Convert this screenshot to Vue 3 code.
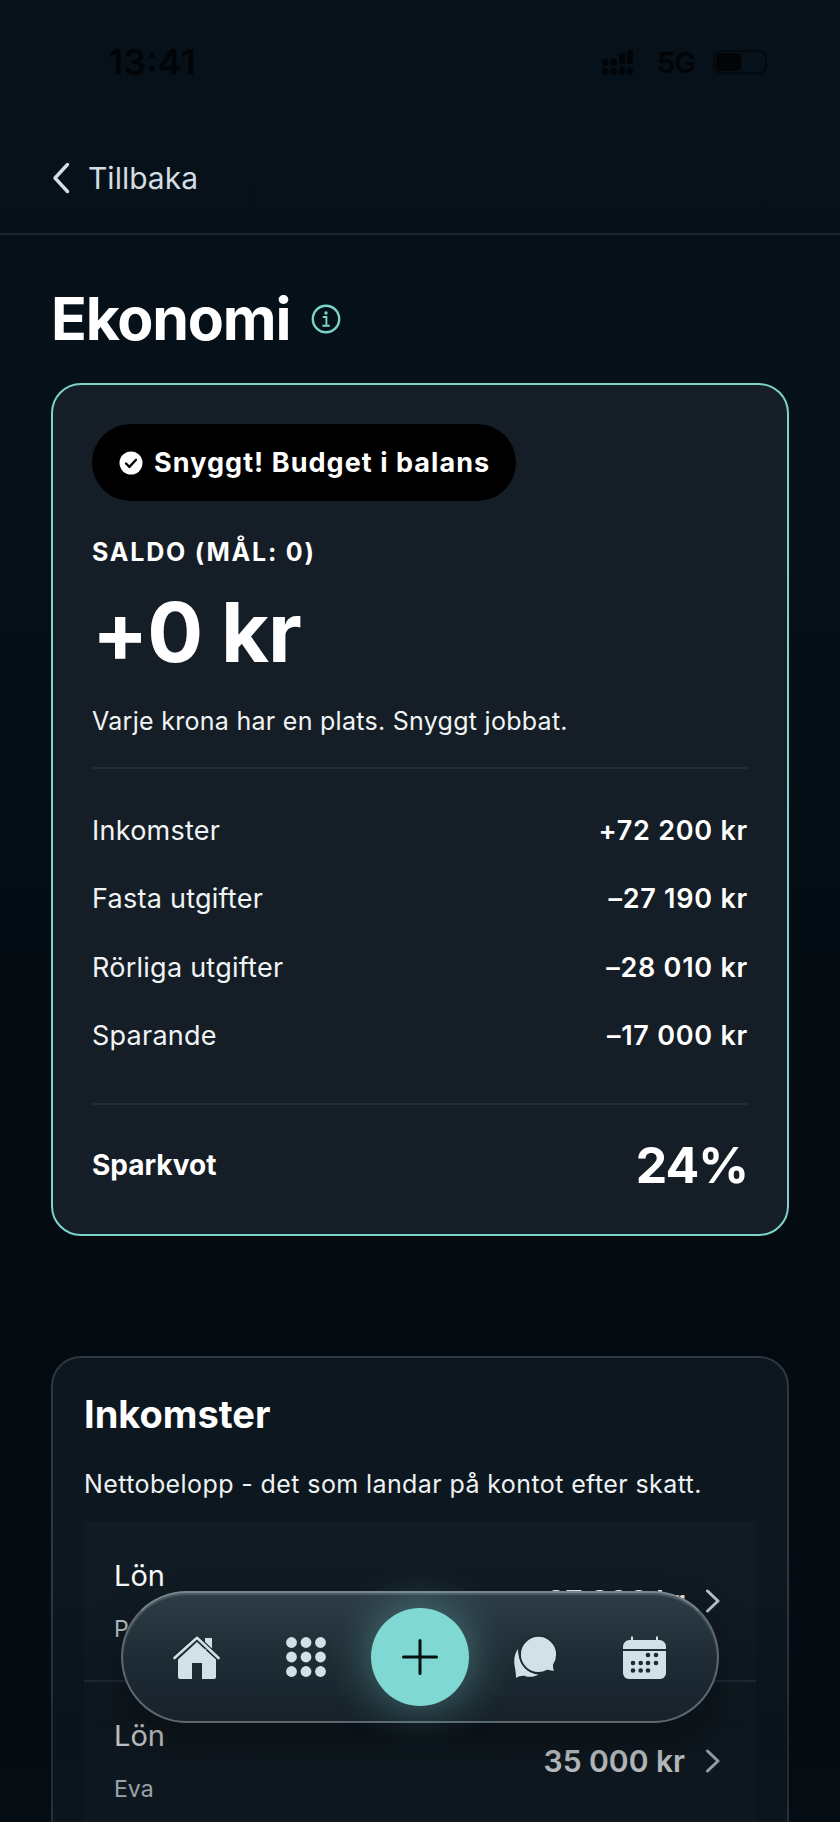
<script setup>
const summary = [
  { label: 'Inkomster', value: '+72 200 kr' },
  { label: 'Fasta utgifter', value: '–27 190 kr' },
  { label: 'Rörliga utgifter', value: '–28 010 kr' },
  { label: 'Sparande', value: '–17 000 kr' },
]

const incomes = [
  { title: 'Lön', owner: 'Per', amount: '37 200 kr' },
  { title: 'Lön', owner: 'Eva', amount: '35 000 kr' },
]

const calendarDots = [
  [25, 19], [33, 19],
  [10, 27], [17.7, 27], [25, 27], [33, 27],
  [10, 34.5], [17.7, 34.5], [25, 34.5],
]
</script>

<template>
  <div class="page">
    <div class="status">
      <span class="time">13:41</span>
      <div class="status-right">
        <svg class="signal" width="31" height="26" viewBox="0 0 31 26">
          <rect x="0" y="10" width="6.500" height="7" rx="3" />
          <rect x="0" y="19" width="6.500" height="7" rx="3" />
          <rect x="8.500" y="10" width="6.500" height="7" rx="3" />
          <rect x="8.500" y="19" width="6.500" height="7" rx="3" />
          <rect x="17" y="4" width="6.500" height="11" rx="3" />
          <rect x="17" y="18" width="6.500" height="8" rx="3" />
          <rect x="25" y="1" width="6" height="14" rx="3" />
          <rect x="25" y="18" width="6" height="8" rx="3" />
        </svg>
        <span class="net">5G</span>
        <div class="battery"><div class="battery-fill"></div></div>
      </div>
    </div>

    <header class="topbar">
      <svg width="18" height="32" viewBox="0 0 18 32" fill="none">
        <path d="M15.500 2.500 3 16l12.500 13.500" stroke="#d6e0e4" stroke-width="3.400" stroke-linecap="round" stroke-linejoin="round" />
      </svg>
      <span class="back">Tillbaka</span>
    </header>

    <main class="content">
      <div class="heading">
        <h1>Ekonomi</h1>
        <svg width="30" height="30" viewBox="0 0 30 30" fill="none">
          <circle cx="15" cy="15" r="13.200" stroke="#7dd3cc" stroke-width="2.400" />
          <circle cx="15" cy="9" r="1.700" fill="#7dd3cc" />
          <path d="M11.800 13h3.600v8.600M11.400 21.800h7.400" stroke="#7dd3cc" stroke-width="1.900" />
        </svg>
      </div>

      <section class="balance">
        <div class="badge">
          <svg width="24" height="24" viewBox="0 0 24 24">
            <circle cx="12" cy="12" r="11.500" fill="#fff" />
            <path d="M7 12.500l3.400 3.400L17 8.800" fill="none" stroke="#000" stroke-width="2.300" stroke-linecap="round" stroke-linejoin="round" />
          </svg>
          <span>Snyggt! Budget i balans</span>
        </div>
        <div class="saldo-label">SALDO (MÅL: 0)</div>
        <div class="saldo">+0 kr</div>
        <p class="saldo-note">Varje krona har en plats. Snyggt jobbat.</p>

        <div class="rows">
          <div v-for="row in summary" :key="row.label" class="row">
            <span>{{ row.label }}</span>
            <strong>{{ row.value }}</strong>
          </div>
        </div>

        <div class="rate">
          <strong>Sparkvot</strong>
          <span>24%</span>
        </div>
      </section>

      <section class="income">
        <h2>Inkomster</h2>
        <p>Nettobelopp - det som landar på kontot efter skatt.</p>
        <div class="income-list">
          <div v-for="item in incomes" :key="item.owner" class="income-row">
            <div class="income-text">
              <span class="income-title">{{ item.title }}</span>
              <span class="income-owner">{{ item.owner }}</span>
            </div>
            <span class="income-amount">{{ item.amount }}</span>
            <svg width="16" height="24" viewBox="0 0 16 24" fill="none">
              <path d="M2.500 2 13 12 2.500 22" stroke="#c3ccd2" stroke-width="3" stroke-linecap="round" stroke-linejoin="round" />
            </svg>
          </div>
        </div>
      </section>
    </main>

    <div class="fade"></div>

    <nav class="dock">
      <svg class="nav-icon home" width="47" height="43" viewBox="0 0 47 43">
        <rect x="32" y="2" width="7" height="12" fill="#d3e0e7" />
        <path d="M24 6 43 23.500V41a2 2 0 0 1-2 2H29V27H19v16H7a2 2 0 0 1-2-2V23.500Z" fill="#d3e0e7" />
        <path d="M1.500 22 24 1.800 45.500 22" fill="none" stroke="#1d2a33" stroke-width="5" stroke-linejoin="round" />
        <path d="M1.500 22 24 1.800 45.500 22" fill="none" stroke="#d3e0e7" stroke-width="2.600" stroke-linecap="round" stroke-linejoin="round" />
      </svg>
      <svg class="nav-icon" width="40" height="40" viewBox="0 0 40 40" fill="#d3e0e7">
        <template v-for="y in [5.500, 20, 34.500]" :key="y">
          <circle v-for="x in [5.500, 20, 34.500]" :key="x" :cx="x" :cy="y" r="5.400" />
        </template>
      </svg>
      <button class="add">
        <svg width="36" height="36" viewBox="0 0 36 36">
          <path d="M18 1.500v33M1.500 18h33" stroke="#06100f" stroke-width="3" stroke-linecap="round" />
        </svg>
      </button>
      <svg class="nav-icon" width="44" height="44" viewBox="0 0 44 44">
        <path d="M4 14C0 19-.5 27 1 33c.5 2.500 1 6.500 1 10 3-1.800 6.500-2.800 9.500-1.800 4 1 9 .8 13-1.700C15 39 4 30 4 14Z" fill="#d3e0e7" />
        <path d="M24.500 .8C14.500 .8 6 9.300 6 19.500S14.500 38 24.500 38c3.500 0 6.500-1 9-2.400 2.200.4 5 1 7.700 1.400-1.200-2.800-1.500-5.600-1.200-7.600 2-2.900 3-6.300 3-10C43 9.300 34.500 .8 24.500 .8Z" fill="#d3e0e7" stroke="#1d2a33" stroke-width="1.800" />
      </svg>
      <svg class="nav-icon calendar" width="43" height="43" viewBox="0 0 43 43">
        <path d="M8 0.500h2V4h23V0.500h2V4h1.500A6.500 6.500 0 0 1 43 10.500V13H0v-2.500A6.500 6.500 0 0 1 6.500 4H8Z" fill="#d3e0e7" />
        <path d="M0 15h43v22a6 6 0 0 1-6 6H6a6 6 0 0 1-6-6Z" fill="#d3e0e7" />
        <circle v-for="dot in calendarDots" :key="dot.join()" :cx="dot[0]" :cy="dot[1]" r="2.300" fill="#1d2a33" />
      </svg>
    </nav>
  </div>
</template>

<style scoped>
.page {
  position: relative;
  width: 840px;
  height: 1822px;
  overflow: hidden;
  background: linear-gradient(180deg, #07111a 0%, #061018 25%, #030a10 70%, #050d14 100%);
  font-family: Inter, "Liberation Sans", sans-serif;
  color: #fff;
}

.status {
  height: 134px;
  box-sizing: border-box;
  padding: 40px 73px 0 108px;
  display: flex;
  justify-content: space-between;
  align-items: flex-start;
  color: #010508;
}

.time {
  font-size: 36px;
  font-weight: 600;
  line-height: 44px;
}

.status-right {
  display: flex;
  align-items: center;
  gap: 24px;
  height: 44px;
}

.signal rect {
  fill: #010508;
}

.net {
  font-size: 29px;
  font-weight: 600;
  margin-right: -6px;
  letter-spacing: -1px;
}

.battery {
  width: 54px;
  height: 24px;
  box-sizing: border-box;
  padding: 1px;
  border: 2px solid #04090e;
  border-radius: 8px;
}

.battery-fill {
  width: 25px;
  height: 100%;
  background: #010508;
  border-radius: 5px;
}

.topbar {
  height: 101px;
  box-sizing: border-box;
  padding: 0 52px 12px;
  display: flex;
  align-items: center;
  gap: 18px;
  border-bottom: 2px solid #1a252d;
}

.back {
  font-size: 30px;
  color: #d3dde2;
}

.content {
  padding: 0 51px 0 51px;
}

.heading {
  display: flex;
  align-items: center;
  gap: 21px;
  height: 148px;
  box-sizing: border-box;
  padding-top: 19px;
}

h1 {
  margin: 0;
  font-size: 59px;
  font-weight: 700;
  letter-spacing: -1.2px;
  line-height: 1;
}

.balance {
  box-sizing: border-box;
  height: 853px;
  padding: 39px 39px 0;
  background: #151e26;
  border: 2px solid #7dd3cc;
  border-radius: 30px;
}

.badge {
  display: inline-flex;
  align-items: center;
  gap: 11px;
  height: 77px;
  padding: 0 26px 0 27px;
  border-radius: 39px;
  background: #000;
  font-size: 27px;
  font-weight: 700;
  letter-spacing: 1.05px;
}

.saldo-label {
  margin-top: 36px;
  font-size: 25px;
  font-weight: 700;
  letter-spacing: 1.8px;
  line-height: 30px;
}

.saldo {
  margin-top: 20px;
  font-size: 83px;
  font-weight: 700;
  line-height: 90px;
  letter-spacing: -1px;
}

.saldo-note {
  margin: 29px 0 0;
  padding-bottom: 31px;
  font-size: 25px;
  line-height: 30px;
  letter-spacing: 0.28px;
  border-bottom: 2px solid #222c34;
  color: #f1f4f5;
}

.rows {
  padding: 27px 0 33px;
  border-bottom: 2px solid #222c34;
}

.row {
  height: 68.500px;
  display: flex;
  align-items: center;
  justify-content: space-between;
  font-size: 27px;
  letter-spacing: 0.25px;
  color: #f1f4f5;
}

.row strong {
  font-weight: 600;
  letter-spacing: 0.75px;
  color: #fff;
}

.rate {
  height: 120px;
  display: flex;
  align-items: center;
  justify-content: space-between;
}

.rate strong {
  font-size: 28px;
  font-weight: 700;
}

.rate span {
  font-size: 50px;
  font-weight: 700;
  letter-spacing: -1px;
}

.income {
  box-sizing: border-box;
  height: 600px;
  margin-top: 120px;
  padding: 34px 31px;
  background: #0d171f;
  border: 2px solid #2e3840;
  border-radius: 30px;
}

h2 {
  margin: 0;
  font-size: 38px;
  font-weight: 700;
  line-height: 44px;
}

.income > p {
  margin: 32px 0 0;
  font-size: 25px;
  line-height: 32px;
  letter-spacing: 0.4px;
  color: #eef2f3;
}

.income-list {
  margin-top: 22px;
  background: #111b23;
}

.income-row {
  box-sizing: border-box;
  height: 160px;
  padding: 0 35px 0 30px;
  display: flex;
  align-items: center;
  gap: 20px;
  border-bottom: 2px solid #242e36;
}

.income-text {
  flex: 1;
  display: flex;
  flex-direction: column;
  gap: 22px;
}

.income-title {
  font-size: 29px;
  line-height: 34px;
  color: #fff;
}

.income-owner {
  font-size: 23px;
  line-height: 28px;
  color: #c8d0d6;
}

.income-amount {
  font-size: 30px;
  font-weight: 600;
  color: #f1f4f5;
}

.fade {
  position: absolute;
  left: 0;
  right: 0;
  bottom: 0;
  height: 262px;
  background: linear-gradient(180deg, rgba(5, 12, 18, 0), rgba(5, 12, 18, 0.26) 62%, rgba(5, 12, 18, 0.22));
  pointer-events: none;
}

.dock {
  position: absolute;
  left: 121px;
  top: 1591px;
  box-sizing: border-box;
  width: 598px;
  height: 132px;
  padding-right: 2px;
  display: flex;
  align-items: center;
  justify-content: center;
  gap: 45px;
  border-radius: 66px;
  border: 2px solid #5c6770;
  border-top-color: #79858d;
  background: linear-gradient(180deg, #2d3d47 0%, #1f2c35 50%, #17222b 100%);
  box-shadow: 0 18px 40px rgba(0, 0, 0, 0.3), inset 0 2px 1px rgba(255, 255, 255, 0.16);
}

.home {
  margin-right: 21px;
}

.calendar {
  margin-left: 20px;
}

.add {
  width: 98px;
  height: 98px;
  padding: 0;
  border: none;
  border-radius: 50%;
  display: flex;
  align-items: center;
  justify-content: center;
  background: #7fd8d1;
  box-shadow: 0 0 46px rgba(127, 216, 209, 0.45);
}
</style>

<style>
body {
  background: #030a10;
}
</style>
